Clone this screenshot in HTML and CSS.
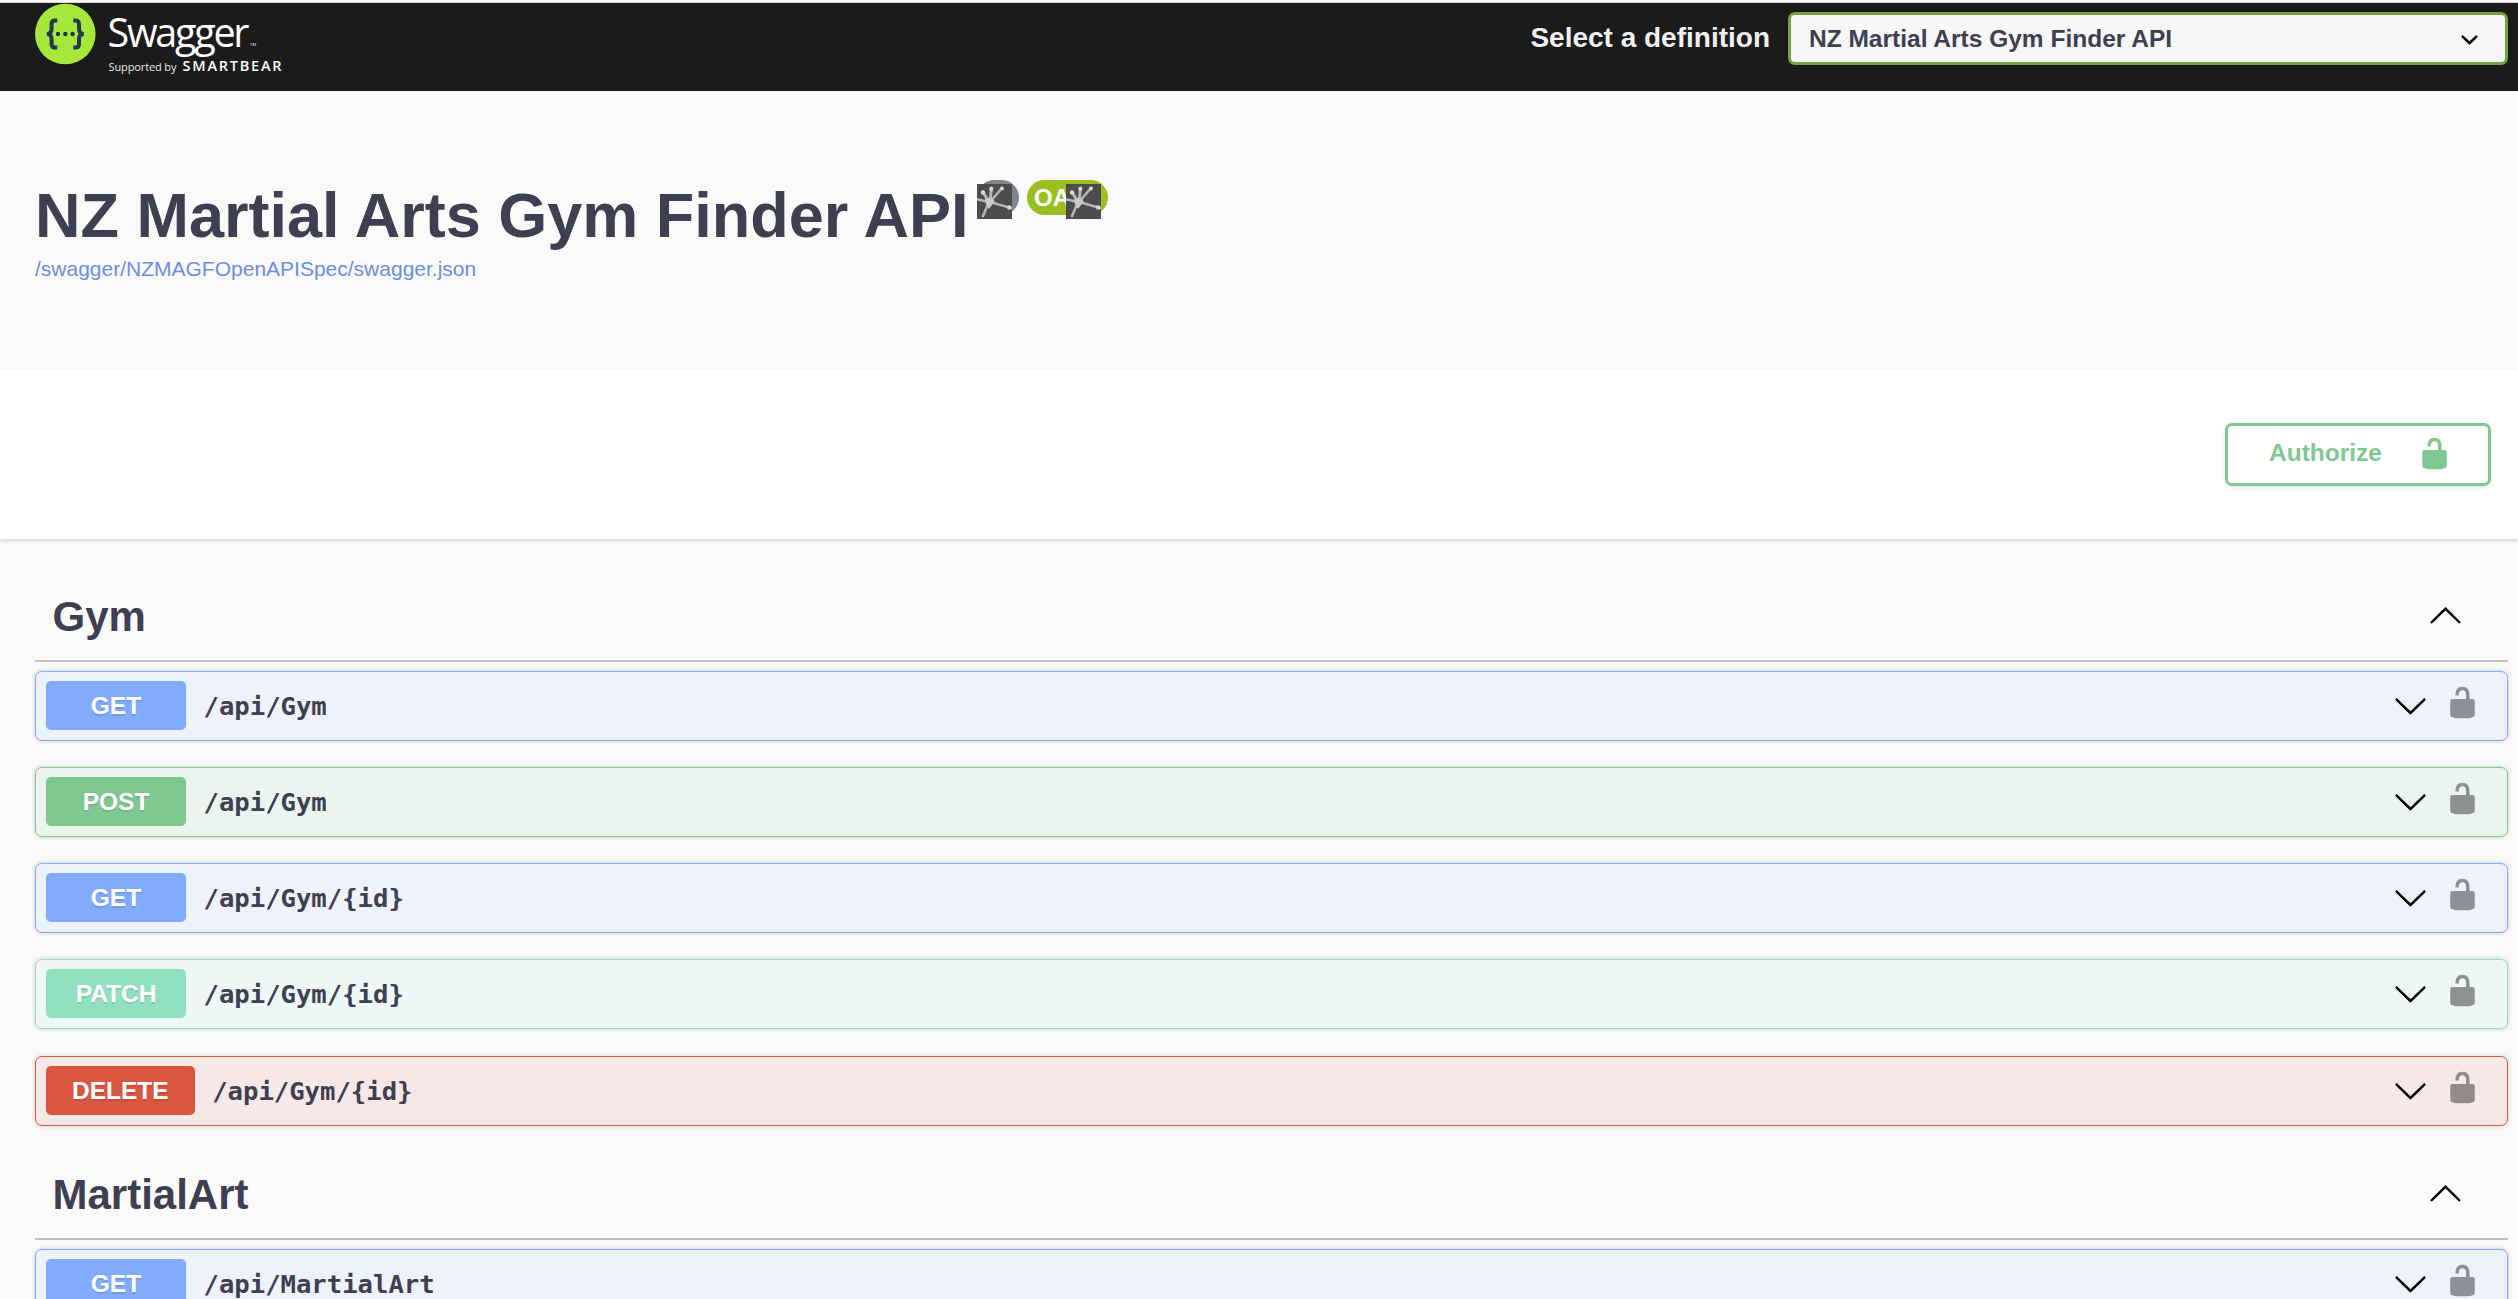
FILE: index.html
```html
<!DOCTYPE html>
<html lang="en">
<head>
<meta charset="utf-8">
<title>NZ Martial Arts Gym Finder API</title>
<link rel="stylesheet" href="styles.css">
</head>
<body>
<svg class="defs" aria-hidden="true">
  <symbol id="unlocked" viewBox="0 0 20 20"><path d="M15.8 8H14V5.6C14 2.703 12.665 1 10 1 7.334 1 6 2.703 6 5.6V6h2v-.801C8 3.754 8.797 3 10 3c1.203 0 2 .754 2 2.199V8H4c-.553 0-1 .646-1 1.199V17c0 .549.428 1.139.951 1.307l1.197.387C5.672 18.861 6.55 19 7.1 19h5.8c.549 0 1.428-.139 1.951-.307l1.196-.387c.524-.167.953-.757.953-1.306V9.199C17 8.646 16.352 8 15.8 8z"/></symbol>
  <symbol id="down" viewBox="0 0 20 20"><path d="M17.418 6.109c.272-.268.709-.268.979 0s.271.701 0 .969l-7.908 7.83c-.27.268-.707.268-.979 0l-7.908-7.83c-.27-.268-.27-.701 0-.969.271-.268.709-.268.979 0L10 13.25l7.418-7.141z"/></symbol>
  <symbol id="up" viewBox="0 0 20 20"><path d="M17.418 14.908c.272.268.709.268.979 0s.271-.701 0-.969l-7.908-7.83c-.27-.268-.707-.268-.979 0l-7.908 7.83c-.27.268-.27.701 0 .969.271.268.709.268.979 0L10 7.767l7.418 7.141z"/></symbol>
  <symbol id="burst" viewBox="0 0 35 35">
    <rect width="35" height="35" fill="#4c4c4c"/>
    <g stroke="#b4b4b4" stroke-linecap="round" fill="none">
      <path d="M12 18L6 8" stroke-width="3"/><path d="M13 18L14.500 4" stroke-width="3"/><path d="M13 18L25 4" stroke-width="2.600"/>
      <path d="M12 18L1 15.500" stroke-width="2.600"/><path d="M13 18L34 24" stroke-width="2.800"/><path d="M12 18L6 32" stroke-width="2.600"/>
    </g>
    <path d="M8 15l4-1 4 1 2 3-3 3-3 4-3-5z" fill="#cacaca"/>
    <g fill="#d8d8d8"><circle cx="6" cy="8.500" r="2.200"/><circle cx="14.300" cy="4.800" r="2.100"/><circle cx="25" cy="4.500" r="2"/><circle cx="32.300" cy="23.500" r="2.200"/></g>
  </symbol>
</svg>

<header class="topbar">
  <svg class="logo" width="260" height="76" viewBox="0 0 260 76">
    <circle cx="30.300" cy="31" r="30.300" fill="#a6e73c"/>
    <g fill="none" stroke="#24374b" stroke-width="4">
      <path d="M22.300 17.500h-2.300q-3.400 0-3.400 3.600v4.500q0 5.400-4.800 5.400q4.800 0 4.800 5.400v4.500q0 3.600 3.400 3.600h2.300"/>
      <path d="M38.300 17.500h2.300q3.400 0 3.400 3.600v4.500q0 5.400 4.800 5.400q-4.800 0-4.800 5.400v4.500q0 3.600-3.400 3.600h-2.300"/>
    </g>
    <g fill="#24374b"><circle cx="23" cy="31" r="2.200"/><circle cx="30.300" cy="31" r="2.200"/><circle cx="37.600" cy="31" r="2.200"/></g>
    <text class="logo-name" x="72.500" y="43.500" textLength="142">Swagger</text>
    <text class="logo-tm" x="215" y="43" textLength="6">TM</text>
    <text class="logo-by" x="73.500" y="68" textLength="68">Supported by</text>
    <text class="logo-bear" x="147.500" y="68" textLength="99">SMARTBEAR</text>
  </svg>
  <label class="definition">
    <span class="definition-label">Select a definition</span>
    <span class="select">NZ Martial Arts Gym Finder API
      <svg width="35" height="35" viewBox="0 0 20 20"><path d="M13.418 7.859a.695.695 0 01.978 0 .68.68 0 010 .969l-3.908 3.830a.697.697 0 01-.979 0l-3.908-3.830a.68.68 0 010-.969.695.695 0 01.978 0L10 11l3.418-3.141z"/></svg>
    </span>
  </label>
</header>

<section class="info">
  <h1 class="title">NZ Martial Arts Gym Finder API</h1>
  <span class="badge version"><svg><use href="#burst"/></svg></span>
  <span class="badge oas">OA<svg><use href="#burst"/></svg></span>
  <a class="spec">/swagger/NZMAGFOpenAPISpec/swagger.json</a>
</section>

<section class="schemes">
  <button class="authorize"><span>Authorize</span><svg class="icon"><use href="#unlocked"/></svg></button>
</section>

<main class="operations">
  <h2 class="tag"><span>Gym</span><svg class="icon"><use href="#up"/></svg></h2>
  <div class="op get"><span class="method">GET</span><span class="path">/api/Gym</span><svg class="icon"><use href="#down"/></svg><svg class="icon lock"><use href="#unlocked"/></svg></div>
  <div class="op post"><span class="method">POST</span><span class="path">/api/Gym</span><svg class="icon"><use href="#down"/></svg><svg class="icon lock"><use href="#unlocked"/></svg></div>
  <div class="op get"><span class="method">GET</span><span class="path">/api/Gym/{id}</span><svg class="icon"><use href="#down"/></svg><svg class="icon lock"><use href="#unlocked"/></svg></div>
  <div class="op patch"><span class="method">PATCH</span><span class="path">/api/Gym/{id}</span><svg class="icon"><use href="#down"/></svg><svg class="icon lock"><use href="#unlocked"/></svg></div>
  <div class="op delete"><span class="method">DELETE</span><span class="path">/api/Gym/{id}</span><svg class="icon"><use href="#down"/></svg><svg class="icon lock"><use href="#unlocked"/></svg></div>
  <h2 class="tag"><span>MartialArt</span><svg class="icon"><use href="#up"/></svg></h2>
  <div class="op get"><span class="method">GET</span><span class="path">/api/MartialArt</span><svg class="icon"><use href="#down"/></svg><svg class="icon lock"><use href="#unlocked"/></svg></div>
</main>
</body>
</html>
```
FILE: styles.css
```css
* { box-sizing: border-box; }
html { height: 100%; overflow: hidden; }
body {
  margin: 0;
  height: 100%;
  overflow: hidden;
  background: #fafafa;
  color: #3e4052;
  font-family: "Liberation Sans", Arial, sans-serif;
}
svg { display: block; flex: none; }
.defs { display: none; }
.icon { width: 35px; height: 35px; fill: currentColor; }

.topbar {
  display: flex;
  justify-content: space-between;
  align-items: flex-start;
  height: 89px;
  margin-top: 2px;
  padding: 0 10px 0 35px;
  background: #1b1b1b;
  border-top: 1px solid #d6d6d8;
  box-shadow: 0 -2px 0 #f8f8f8;
}
.logo { overflow: visible; }
.logo text { fill: #fff; font-family: "Open Sans", "Noto Sans", sans-serif; }
.logo .logo-name { font-size: 39.500px; font-weight: 400; }
.logo .logo-tm { font-size: 4px; }
.logo .logo-by { font-size: 11px; fill: #e8e8e8; }
.logo .logo-bear { font-size: 14.500px; font-weight: 600; }
.definition { display: flex; align-items: center; gap: 18px; padding-top: 9px; }
.definition-label {
  margin-top: -1px;
  color: #f0f0f0;
  font-size: 28px;
  font-weight: 700;
  line-height: 32px;
}
.select {
  display: flex;
  align-items: center;
  justify-content: space-between;
  width: 720px;
  height: 53px;
  padding: 0 18px 0 18px;
  border: 3px solid #77a244;
  border-radius: 7px;
  background: #f7f7f7;
  font-size: 24.500px;
  font-weight: 700;
}
.select svg { margin-top: 1px; }

.info {
  display: grid;
  grid-template-columns: auto auto auto 1fr;
  grid-template-rows: 76px 28px;
  align-items: start;
  height: 279px;
  padding: 88px 35px 0;
}
.title { margin: -1px 0 0; font-size: 63px; line-height: 74px; font-weight: 700; }
.badge {
  position: relative;
  height: 35px;
  margin-top: 1px;
  border-radius: 18px;
  color: #fff;
  font-size: 24px;
  font-weight: 700;
  line-height: 35px;
}
.badge svg { position: absolute; top: 4px; width: 35px; height: 35px; }
.version { width: 42px; margin-left: 8px; background: #7d8492; }
.version svg { left: 0; }
.oas { width: 81px; margin-left: 8px; padding-left: 7.500px; background: #9abf20; }
.oas svg { left: 39px; }
.spec { grid-column: 1 / -1; color: #6b8ee3; font-size: 21px; line-height: 28px; }

.schemes {
  display: flex;
  justify-content: flex-end;
  align-items: center;
  height: 169px;
  padding: 0 27px 0 0;
  background: #fff;
  box-shadow: 0 2px 4px rgba(0, 0, 0, .15);
}
.authorize {
  display: flex;
  align-items: center;
  justify-content: space-between;
  width: 266px;
  height: 63px;
  padding: 0 36px 3px 41px;
  border: 3px solid #80c892;
  border-radius: 7px;
  background: transparent;
  box-shadow: 0 2px 4px rgba(0, 0, 0, .1);
  color: #80c892;
  font: 700 24.500px "Liberation Sans", Arial, sans-serif;
}

.operations { padding: 34.500px 10px 0 35px; }
.tag {
  display: flex;
  align-items: center;
  justify-content: space-between;
  height: 88.250px;
  margin: 0 0 8.750px;
  padding: 0 45px 0 17.500px;
  border-bottom: 2px solid rgba(59, 65, 81, .3);
  font-size: 42px;
  line-height: 50px;
}
.tag .icon { margin-top: -5px; color: #000; }
.op {
  display: flex;
  align-items: center;
  height: 70px;
  margin-bottom: 26.250px;
  padding: 0 27px 0 10px;
  border: 1px solid;
  border-radius: 7px;
  box-shadow: 0 0 5px rgba(0, 0, 0, .19);
}
.method {
  min-width: 140px;
  height: 49px;
  margin-top: -1px;
  padding: 0 26px;
  border-radius: 5px;
  color: #fff;
  font-size: 24.500px;
  font-weight: 700;
  line-height: 49px;
  text-align: center;
  text-shadow: 0 2px 0 rgba(0, 0, 0, .1);
}
.path {
  flex: 1;
  padding-left: 17.500px;
  font-family: "DejaVu Sans Mono", monospace;
  font-size: 25.600px;
  font-weight: 700;
}
.op .icon { margin-top: -1px; color: #000; }
.op .lock { margin: -7px 0 0 17px; opacity: .4; }
.get { border-color: #82abfc; background: #edf2fb; }
.get .method { background: #82abfc; }
.post { border-color: #80c892; background: #ebf5ef; }
.post .method { background: #80c892; }
.patch { border-color: #90e0c1; background: #edf7f5; }
.patch .method { background: #90e0c1; }
.delete { border-color: #d95740; background: #f6e8e6; }
.delete .method { background: #d95740; }
```
